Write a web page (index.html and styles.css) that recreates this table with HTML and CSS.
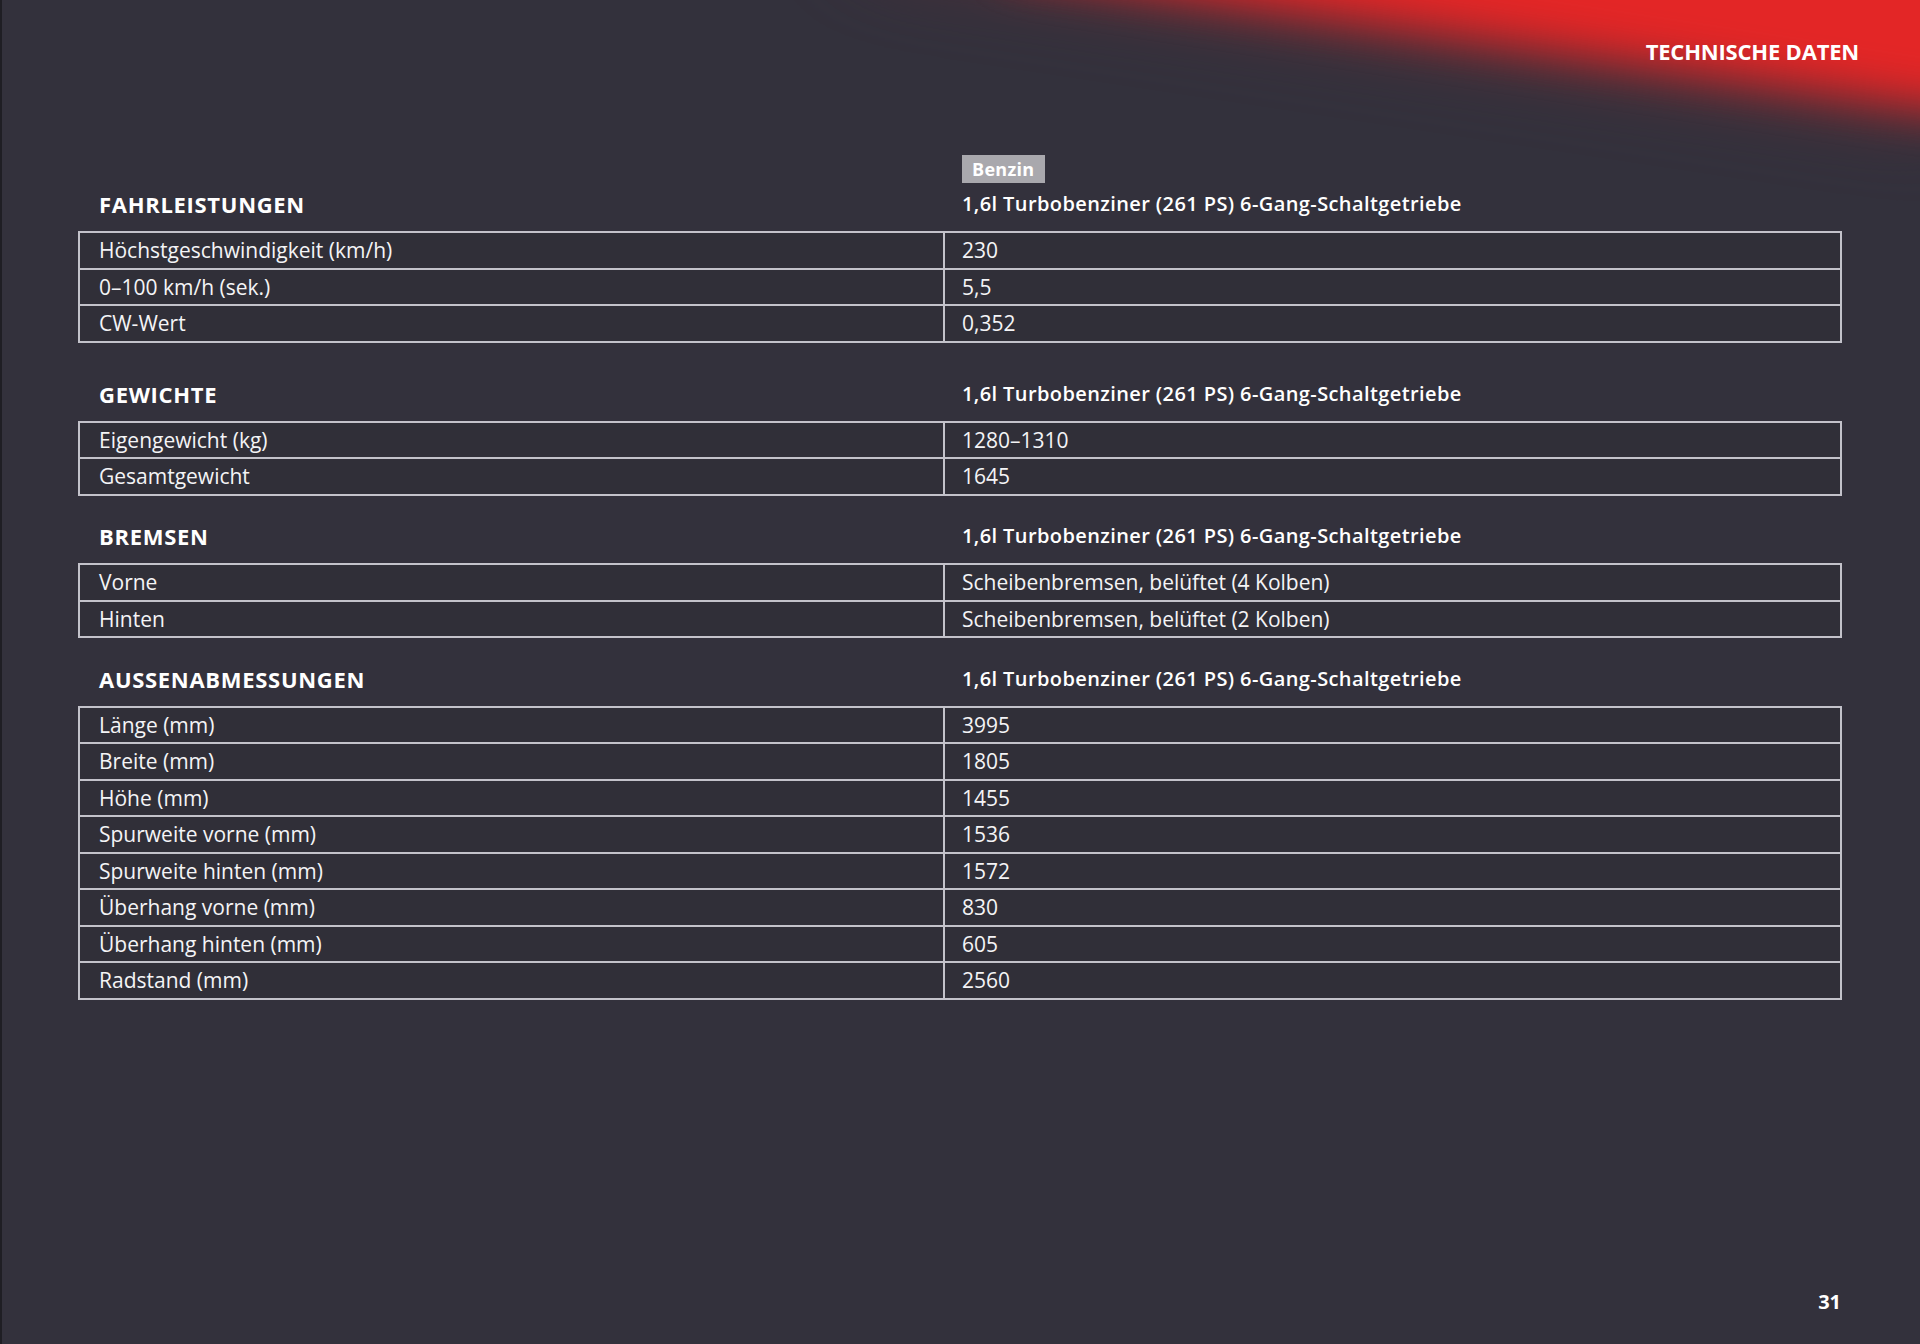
FILE: index.html
```html
<!DOCTYPE html>
<html lang="de">
<head>
<meta charset="utf-8">
<title>Technische Daten</title>
<link rel="stylesheet" href="styles.css">
</head>
<body>
<div class="page">
  <div class="flare flare-soft"></div>
  <div class="flare"></div>
  <header class="topbar"><span class="title">TECHNISCHE DATEN</span></header>
  <main class="content">
    <section class="spec spec-first">
      <div class="spec-head">
        <h2 class="spec-title">FAHRLEISTUNGEN</h2>
        <div class="engine">
          <span class="badge">Benzin</span>
          <h3 class="engine-name">1,6l Turbobenziner (261 PS) 6-Gang-Schaltgetriebe</h3>
        </div>
      </div>
      <table class="spec-table">
        <tr><td>Höchstgeschwindigkeit (km/h)</td><td>230</td></tr>
        <tr><td>0–100 km/h (sek.)</td><td>5,5</td></tr>
        <tr><td>CW-Wert</td><td>0,352</td></tr>
      </table>
    </section>
    <section class="spec spec-second">
      <div class="spec-head">
        <h2 class="spec-title">GEWICHTE</h2>
        <div class="engine"><h3 class="engine-name">1,6l Turbobenziner (261 PS) 6-Gang-Schaltgetriebe</h3></div>
      </div>
      <table class="spec-table">
        <tr><td>Eigengewicht (kg)</td><td>1280–1310</td></tr>
        <tr><td>Gesamtgewicht</td><td>1645</td></tr>
      </table>
    </section>
    <section class="spec">
      <div class="spec-head">
        <h2 class="spec-title">BREMSEN</h2>
        <div class="engine"><h3 class="engine-name">1,6l Turbobenziner (261 PS) 6-Gang-Schaltgetriebe</h3></div>
      </div>
      <table class="spec-table">
        <tr><td>Vorne</td><td>Scheibenbremsen, belüftet (4 Kolben)</td></tr>
        <tr><td>Hinten</td><td>Scheibenbremsen, belüftet (2 Kolben)</td></tr>
      </table>
    </section>
    <section class="spec">
      <div class="spec-head">
        <h2 class="spec-title">AUSSENABMESSUNGEN</h2>
        <div class="engine"><h3 class="engine-name">1,6l Turbobenziner (261 PS) 6-Gang-Schaltgetriebe</h3></div>
      </div>
      <table class="spec-table">
        <tr><td>Länge (mm)</td><td>3995</td></tr>
        <tr><td>Breite (mm)</td><td>1805</td></tr>
        <tr><td>Höhe (mm)</td><td>1455</td></tr>
        <tr><td>Spurweite vorne (mm)</td><td>1536</td></tr>
        <tr><td>Spurweite hinten (mm)</td><td>1572</td></tr>
        <tr><td>Überhang vorne (mm)</td><td>830</td></tr>
        <tr><td>Überhang hinten (mm)</td><td>605</td></tr>
        <tr><td>Radstand (mm)</td><td>2560</td></tr>
      </table>
    </section>
  </main>
  <footer class="pagenum">31</footer>
</div>
</body>
</html>
```

FILE: styles.css
```css
html, body {
  margin: 0;
  padding: 0;
}
body {
  background: #33313c;
  font-family: "Open Sans", "Noto Sans", sans-serif;
  color: #f4f4f6;
}
.page {
  position: relative;
  width: 1920px;
  height: 1344px;
  overflow: hidden;
  display: flex;
  flex-direction: column;
  box-sizing: border-box;
  border-left: 2px solid #1f1e24;
  background: #33313c;
}
.flare {
  position: absolute;
  left: 1000px;
  top: -432px;
  width: 1100px;
  height: 400px;
  background: #e32626;
  transform-origin: bottom left;
  transform: rotate(8.6deg);
  filter: blur(24px);
  z-index: 0;
}
.flare-soft {
  left: 860px;
  top: -455px;
  background: #6e2a33;
  opacity: 0.7;
  filter: blur(45px);
}
.topbar {
  position: relative;
  z-index: 1;
  display: flex;
  justify-content: flex-end;
  padding: 36px 61px 0 0;
}
.title {
  font-size: 22px;
  line-height: 30px;
  font-weight: 700;
  letter-spacing: -0.2px;
  color: #ffffff;
}
.content {
  position: relative;
  z-index: 1;
  padding: 89px 0 0 76px;
}
.spec {
  margin-top: 26.5px;
}
.spec-first {
  margin-top: 0;
}
.spec-second {
  margin-top: 37px;
}
.spec-head {
  display: grid;
  grid-template-columns: 865px 1fr;
  align-items: end;
}
.spec-title {
  margin: 0;
  padding-left: 21px;
  font-size: 22px;
  line-height: 28px;
  font-weight: 700;
  letter-spacing: 0.7px;
  color: #ffffff;
}
.engine {
  display: flex;
  flex-direction: column;
  align-items: flex-start;
  padding-left: 19px;
}
.badge {
  display: inline-block;
  background: #a9a8ad;
  color: #ffffff;
  font-size: 18px;
  line-height: 28px;
  font-weight: 700;
  padding: 0 11px 0 10px;
  margin-bottom: 7px;
  letter-spacing: 0.3px;
}
.engine-name {
  margin: 0;
  font-size: 20px;
  line-height: 28px;
  font-weight: 600;
  color: #ffffff;
  letter-spacing: 0.4px;
}
.spec-table {
  margin-top: 13px;
  width: 1764px;
  border-collapse: collapse;
  font-size: 21px;
}
.spec-table td {
  border: 2px solid #c3c2ca;
  height: 34.5px;
  padding: 0 0 0 19px;
  background: #302f38;
  color: #f4f4f6;
  line-height: 26px;
  vertical-align: middle;
  white-space: nowrap;
}
.spec-table td:first-child {
  width: 844px;
}
.spec-table td + td {
  padding-left: 17px;
}
.pagenum {
  position: relative;
  z-index: 1;
  margin-top: auto;
  align-self: flex-end;
  padding: 0 79px 28px 0;
  font-size: 20px;
  line-height: 28px;
  font-weight: 700;
  color: #ffffff;
}
```
